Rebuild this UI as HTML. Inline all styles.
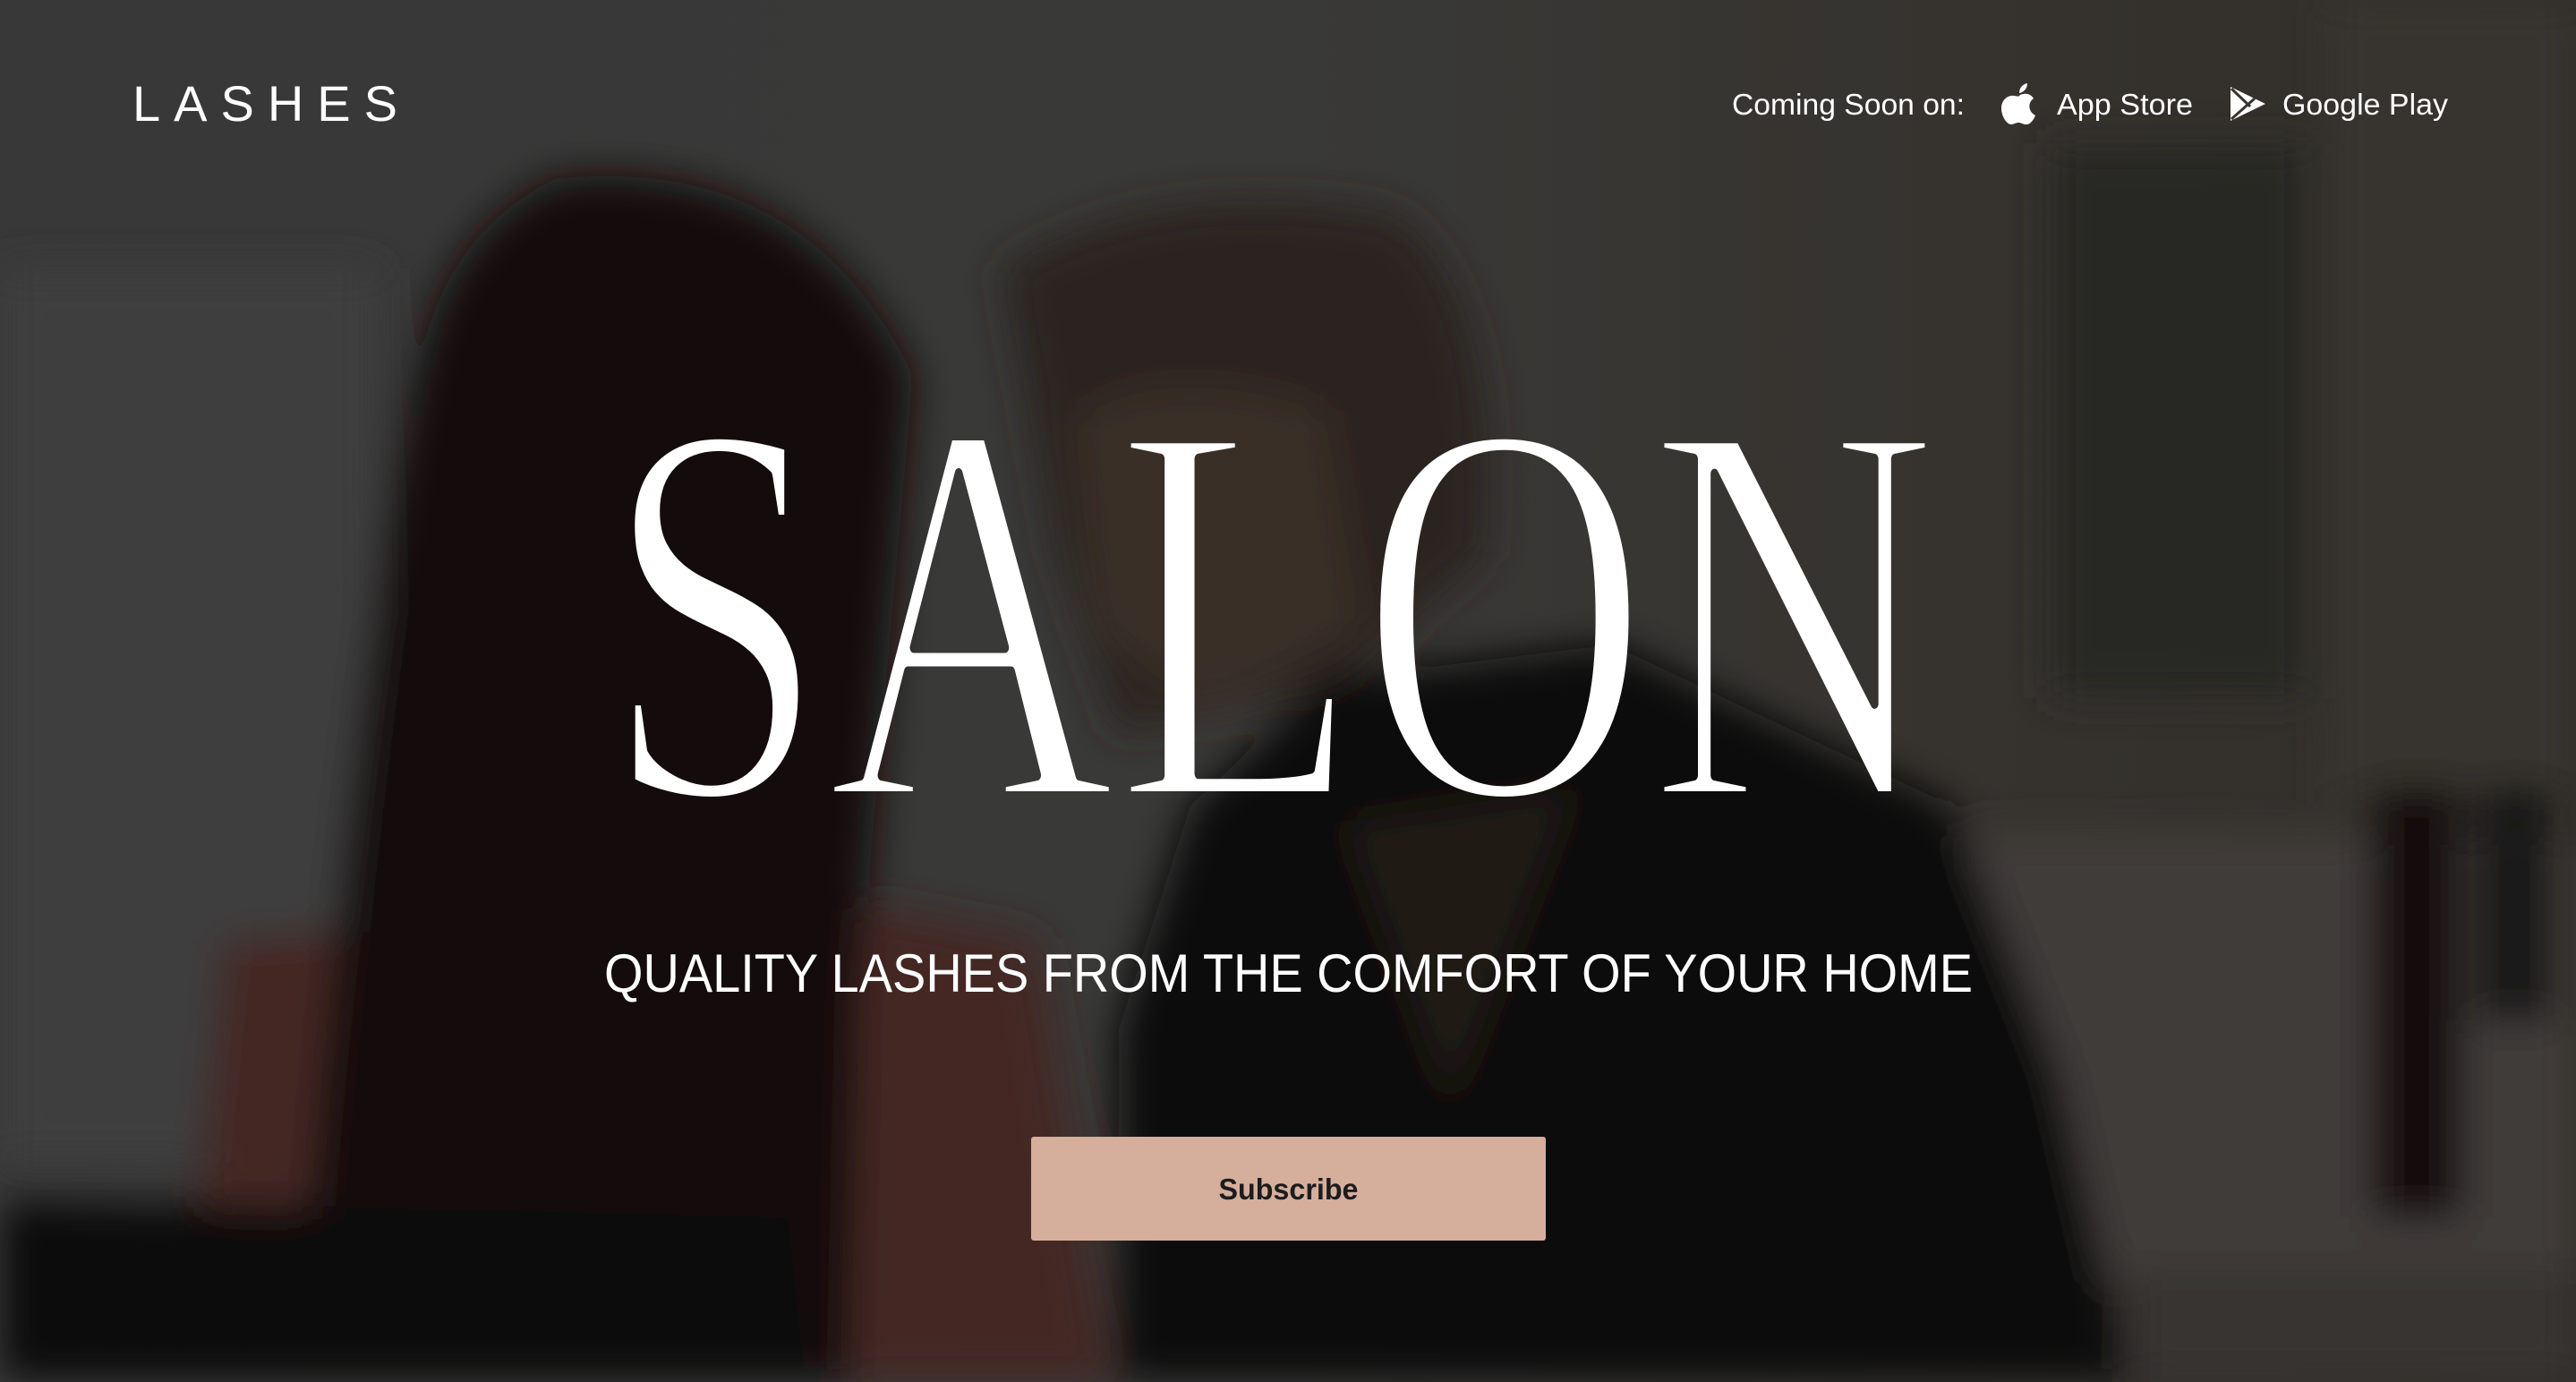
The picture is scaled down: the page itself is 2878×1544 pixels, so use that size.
<!DOCTYPE html>
<html><head><meta charset="utf-8">
<style>
html,body{margin:0;padding:0;width:2878px;height:1544px;overflow:hidden;background:#3a3a3a;}
svg{display:block}
</style></head>
<body>
<svg width="2878" height="1544" viewBox="0 0 2878 1544" xmlns="http://www.w3.org/2000/svg">
<defs>
<filter id="b" x="-20%" y="-20%" width="140%" height="140%"><feGaussianBlur stdDeviation="22"/></filter>
<linearGradient id="bg" x1="0" y1="0" x2="1" y2="0">
<stop offset="0" stop-color="#3c3c3c"/><stop offset="0.5" stop-color="#3d3d3c"/><stop offset="0.75" stop-color="#3a3732"/><stop offset="1" stop-color="#35322c"/>
</linearGradient>
<mask id="m" maskUnits="userSpaceOnUse" x="0" y="0" width="2878" height="1544">
<text x="675" y="890" font-family="Liberation Serif, serif" font-size="612" fill="#fff" stroke="#000" stroke-width="12" stroke-linejoin="round" textLength="1490" lengthAdjust="spacingAndGlyphs">SALON</text>
</mask>
</defs>
<rect width="2878" height="1544" fill="url(#bg)"/>
<g filter="url(#b)">
<rect x="0" y="300" width="420" height="1000" fill="#434343"/>
<rect x="2290" y="160" width="290" height="620" fill="#2c2a26"/>
<rect x="2600" y="0" width="278" height="900" fill="#3b3730"/>
<rect x="2200" y="930" width="678" height="500" fill="#44413d"/>
<rect x="2380" y="1420" width="498" height="124" fill="#3a3835"/>
<path d="M200 1544 L250 1050 L900 1000 L1160 1050 L1240 1544 Z" fill="#4a2c28"/>
<path d="M620 200 Q900 170 1020 420 L960 1100 L950 1544 L330 1544 L360 1200 Q420 600 470 400 Q500 260 620 200 Z" fill="#141110"/>
<path d="M1120 300 Q1300 190 1560 240 Q1680 330 1660 620 L1500 760 L1250 820 L1180 620 Z" fill="#2d2620"/>
<path d="M1200 470 Q1300 400 1480 460 L1520 700 L1350 800 L1220 700 Z" fill="#3c302a"/>
<path d="M1250 1544 L1250 1150 L1330 900 L1480 760 L1800 720 L2180 900 L2300 1200 L2380 1544 Z" fill="#0e0c0a"/>
<path d="M1500 920 L1760 880 L1620 1240 Z" fill="#231c18"/>
<path d="M0 1340 L880 1360 L900 1544 L0 1544 Z" fill="#0f0f0f"/>
<rect x="2650" y="880" width="100" height="480" fill="#121110"/>
<rect x="2770" y="880" width="80" height="260" fill="#151413"/>
</g>
<rect width="2878" height="1544" fill="#000" opacity="0.06"/>

<text x="148" y="135" font-family="Liberation Sans, sans-serif" font-size="56" fill="#fff" textLength="296" lengthAdjust="spacing">LASHES</text>

<g font-family="Liberation Sans, sans-serif" font-size="33" fill="#fff">
<text x="1935" y="128" textLength="260" lengthAdjust="spacingAndGlyphs">Coming Soon on:</text>
<text x="2298" y="128" textLength="152" lengthAdjust="spacingAndGlyphs">App Store</text>
<text x="2550" y="128" textLength="185" lengthAdjust="spacingAndGlyphs">Google Play</text>
</g>
<g fill="#fff">
<path d="M2257 106 C2262 104 2268 104 2272 110 C2266 114 2265 124 2274 129 C2271 136 2267 140 2262 139 C2259 138 2257 137 2255 137 C2252 137 2250 139 2247 139 C2242 139 2236 130 2236 121 C2236 111 2244 106 2250 107 C2253 107 2255 109 2257 106 Z"/>
<path d="M2256 104 C2256 98 2260 94 2265 93 C2265 99 2261 103 2256 104 Z"/>
</g>
<path d="M2492 97 L2531 116 L2492 135 Z" fill="#fff"/>
<path d="M2493 99 L2514 119 M2493 133 L2519 110" stroke="#38352f" stroke-width="3"/>

<text x="675" y="890" font-family="Liberation Serif, serif" font-size="612" fill="#fff" mask="url(#m)" textLength="1490" lengthAdjust="spacingAndGlyphs">SALON</text>

<text x="675" y="1108" font-family="Liberation Sans, sans-serif" font-size="60" fill="#fff" textLength="1529" lengthAdjust="spacingAndGlyphs">QUALITY LASHES FROM THE COMFORT OF YOUR HOME</text>

<rect x="1152" y="1270" width="575" height="116" rx="3" fill="#d5ae9c"/>
<text x="1439.5" y="1340" text-anchor="middle" font-family="Liberation Sans, sans-serif" font-weight="bold" font-size="33" fill="#1c1c1c" textLength="156" lengthAdjust="spacingAndGlyphs">Subscribe</text>
</svg>
</body></html>
